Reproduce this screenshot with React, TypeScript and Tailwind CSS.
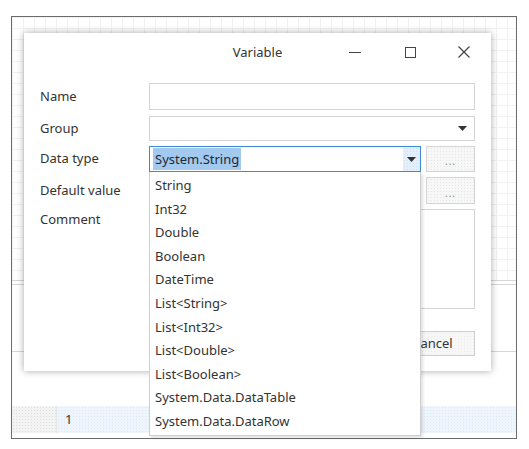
import React from "react";

const items = [
  "String",
  "Int32",
  "Double",
  "Boolean",
  "DateTime",
  "List<String>",
  "List<Int32>",
  "List<Double>",
  "List<Boolean>",
  "System.Data.DataTable",
  "System.Data.DataRow",
];

function Arrow() {
  return (
    <svg width="9" height="5" viewBox="0 0 9 5">
      <path d="M0 0 H9 L4.5 5 Z" fill="#333" />
    </svg>
  );
}

function Ellipsis() {
  return (
    <div className="w-[49px] h-full border border-[#d4d4d4] bg-[#f7f7f7] bg-[radial-gradient(#e6e6e6_0.6px,transparent_0.6px)] bg-[size:3px_3px] flex items-end justify-center pb-[5px] text-[10px] leading-none text-[#888] tracking-[1px]">
      ...
    </div>
  );
}

export default function App() {
  return (
    <div
      className="relative w-[529px] h-[449px] bg-white overflow-hidden text-[13px] text-[#333]"
      style={{ fontFamily: '"Noto Sans", "Open Sans", sans-serif' }}
    >
      {/* background frame */}
      <div className="ml-[11px] mt-[16px] w-[506px] h-[423px] border border-[#6b6b6b] flex flex-col">
        <div className="h-[263px] bg-[linear-gradient(#f1f1f1_1px,transparent_1px),linear-gradient(90deg,#f1f1f1_1px,transparent_1px)] bg-[size:11px_11px] bg-white" />
        <div className="h-[5px] border-t border-b border-[#d6d6d6]" />
        <div className="h-[67px] border-b border-[#d6d6d6]" />
        <div className="h-[54px]" />
        <div className="h-[27px] flex">
          <div className="w-[45px] h-full bg-[#f3f3f3] bg-[radial-gradient(#dcdcdc_0.6px,transparent_0.6px)] bg-[size:3px_3px] border-r border-[#e6e6e6]" />
          <div className="flex-1 h-full bg-[#eef5fc] bg-[radial-gradient(#dce8f5_0.6px,transparent_0.6px)] bg-[size:3px_3px] flex items-center pl-[8px] text-[#333]">
            1
          </div>
        </div>
        <div className="flex-1" />
      </div>

      {/* dialog window */}
      <div className="absolute left-[24px] top-[33px] w-[467px] h-[338px] bg-white shadow-[0_0_7px_rgba(0,0,0,0.35)] flex flex-col">
        {/* title bar */}
        <div className="relative h-[38px] flex items-center justify-center">
          <span className="text-[13px] text-[#333] pt-[1px]">Variable</span>
          <div className="absolute right-0 top-0 h-full flex items-center">
            <div className="w-[56px] h-full flex items-center justify-center">
              <div className="w-[12px] h-[1px] bg-[#444]" />
            </div>
            <div className="w-[54px] h-full flex items-center justify-center">
              <div className="w-[11px] h-[11px] border border-[#444]" />
            </div>
            <div className="w-[54px] h-full flex items-center justify-center">
              <svg width="12" height="12" viewBox="0 0 12 12">
                <path d="M0.5 0.5 L11.5 11.5 M11.5 0.5 L0.5 11.5" stroke="#444" strokeWidth="1.2" />
              </svg>
            </div>
          </div>
        </div>

        {/* form */}
        <div className="flex flex-col pl-[16px] pr-[16px] mt-[12px]">
          <div className="flex h-[27px] items-center">
            <div className="w-[109px]">Name</div>
            <div className="w-[326px] h-full border border-[#d4d4d4] bg-white" />
          </div>
          <div className="flex h-[25px] items-center mt-[6px]">
            <div className="w-[109px]">Group</div>
            <div className="w-[326px] h-full border border-[#d4d4d4] bg-white flex items-center justify-end pr-[7px]">
              <Arrow />
            </div>
          </div>
          <div className="flex h-[26px] items-center mt-[5px]">
            <div className="w-[109px]">Data type</div>
            <div className="relative w-[272px] h-full">
              <div className="w-full h-full border border-[#3d8ad6] bg-white flex items-center">
                <div className="flex-1 pl-[3px] flex items-center">
                  <span className="bg-[#a4c9ee] text-[#1e2a38] px-[2px] leading-[22px]">System.String</span>
                </div>
                <div className="w-[17px] h-full bg-[#e3effa] bg-[radial-gradient(#cfe1f3_0.6px,transparent_0.6px)] bg-[size:3px_3px] flex items-center justify-center">
                  <Arrow />
                </div>
              </div>
              {/* dropdown list */}
              <div className="absolute left-0 top-full w-full z-10 bg-white border border-[#cfcfcf] border-t-0 shadow-[2px_2px_3px_rgba(0,0,0,0.12)] pt-[2px] pb-[1px]">
                {items.map((it) => (
                  <div key={it} className="h-[23.6px] flex items-center pl-[5px] text-[#333]">
                    {it}
                  </div>
                ))}
              </div>
            </div>
            <div className="w-[5px]" />
            <Ellipsis />
          </div>
          <div className="flex h-[27px] items-center mt-[5px]">
            <div className="w-[109px]">Default value</div>
            <div className="w-[272px] h-full border border-[#d4d4d4] bg-white" />
            <div className="w-[5px]" />
            <Ellipsis />
          </div>
          <div className="flex h-[100px] items-start mt-[5px]">
            <div className="w-[109px] pt-[1px]">Comment</div>
            <div className="w-[326px] h-full border border-[#d4d4d4] bg-white" />
          </div>
          <div className="flex h-[25px] mt-[22px] justify-end gap-[8px]">
            <div className="w-[85px] h-full border border-[#cfcfcf] bg-[#f7f7f7] flex items-center justify-center">
              OK
            </div>
            <div className="w-[85px] h-full border border-[#cfcfcf] bg-[#f7f7f7] bg-[radial-gradient(#ececec_0.6px,transparent_0.6px)] bg-[size:3px_3px] flex items-center justify-center">
              Cancel
            </div>
          </div>
        </div>
      </div>
    </div>
  );
}
